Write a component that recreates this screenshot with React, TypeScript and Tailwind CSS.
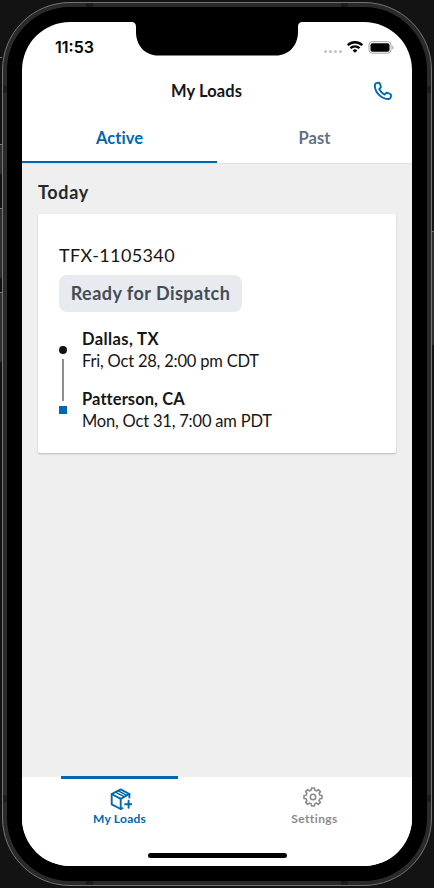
import type { ReactNode } from "react";

type Stop = {
  city: string;
  time: string;
  cityClass: string;
};

const stops: Stop[] = [
  {
    city: "Dallas, TX",
    time: "Fri, Oct 28, 2:00 pm CDT",
    cityClass: "tracking-[0.4px]",
  },
  {
    city: "Patterson, CA",
    time: "Mon, Oct 31, 7:00 am PDT",
    cityClass: "tracking-[0.08px]",
  },
];

const SideButton = ({ className }: { className: string }) => (
  <div
    className={`absolute w-[2px] border-t border-[#777] bg-[#2e2e2e] ${className}`}
  />
);

const AntennaBand = ({ className }: { className: string }) => (
  <div className={`absolute bg-[#1c1c1c] ${className}`} />
);

const Phone = ({ children }: { children: ReactNode }) => (
  <div className="relative h-[888px] w-[434px] overflow-hidden bg-[#131313] p-[2px]">
    <SideButton className="left-0 top-[57px] h-[1px]" />
    <SideButton className="left-0 top-[144px] h-[30px]" />
    <SideButton className="left-0 top-[208px] h-[70px]" />
    <SideButton className="left-0 top-[292px] h-[70px]" />
    <SideButton className="right-0 top-[231px] h-[114px]" />
    <div className="h-full rounded-[68px] border border-[#747474] bg-[#2a2a2a] p-1">
      <div className="h-full rounded-[63px] bg-black p-[15px]">
        <div className="relative flex h-full flex-col overflow-hidden rounded-[48px] bg-white">
          {children}
        </div>
      </div>
    </div>
    <AntennaBand className="left-[86px] top-[3px] h-1 w-[7px]" />
    <AntennaBand className="right-[86px] top-[3px] h-1 w-[7px]" />
    <AntennaBand className="bottom-[3px] left-[86px] h-1 w-[7px]" />
    <AntennaBand className="bottom-[3px] right-[86px] h-1 w-[7px]" />
    <AntennaBand className="left-[3px] top-[86px] h-[7px] w-1" />
    <AntennaBand className="right-[3px] top-[86px] h-[7px] w-1" />
    <AntennaBand className="bottom-[86px] left-[3px] h-[7px] w-1" />
    <AntennaBand className="bottom-[86px] right-[3px] h-[7px] w-1" />
  </div>
);

const Notch = () => (
  <svg
    className="absolute left-[109px] top-0"
    width="172"
    height="34"
    viewBox="0 0 172 34"
    aria-hidden
  >
    <path d="M0 0c3.500 0 5 1.500 5 5v5c0 14 9.500 23.500 22 23.500h118c12.500 0 22-9.500 22-23.500V5c0-3.500 1.500-5 5-5z" />
  </svg>
);

const StatusBar = () => (
  <div className="flex h-[47px] shrink-0 items-center justify-between pl-[33px] pr-[18px] pt-[3px]">
    <span className="font-['Inter',sans-serif] text-[16px] font-semibold leading-5 text-black">
      11:53
    </span>
    <div className="flex items-center">
      <div className="mr-[5px] mt-[9px] flex gap-[2px]">
        {[0, 1, 2, 3].map((i) => (
          <span key={i} className="size-[3px] rounded-full bg-[#c4c4c4]" />
        ))}
      </div>
      <svg width="16" height="12" viewBox="0 0 16 12" aria-hidden>
        <g fill="none" stroke="#000" strokeWidth="2.400">
          <path d="M.8 4.200a10.300 10.300 0 0 1 14.400 0" />
          <path d="M3.500 7.200a6.400 6.400 0 0 1 9 0" />
        </g>
        <path d="M8 11.800 5.600 9.400a3.400 3.400 0 0 1 4.800 0z" />
      </svg>
      <svg className="ml-[5px]" width="26" height="13" viewBox="0 0 26 13" aria-hidden>
        <rect x="1" y=".7" width="22" height="11.500" rx="3.300" fill="none" stroke="#a3a3a3" />
        <rect x="2.500" y="2.200" width="19" height="8.500" rx="2" />
        <path d="M24.300 4.500c1.700.6 1.700 3.400 0 4z" fill="#a3a3a3" />
      </svg>
    </div>
  </div>
);

const PhoneIcon = () => (
  <svg
    className="absolute right-[19px] top-[12px]"
    width="20"
    height="20"
    viewBox="0 0 20 20"
    fill="none"
    stroke="#0067b0"
    strokeWidth="1.900"
    strokeLinecap="round"
    strokeLinejoin="round"
    aria-hidden
  >
    <path d="M3.300 2.200 5 1.800c.9-.2 1.500.1 1.800.8l1 2.500c.3.700.1 1.300-.4 1.800L6.200 8.200c1.200 2.400 2.900 4.100 5.400 5.400l1.200-1.300c.5-.5 1.100-.6 1.800-.4l2.600 1.100c.7.300 1 .9.800 1.700l-.4 1.900c-.2.900-.8 1.400-1.700 1.400C8.300 18 1.800 11.600 1.800 4c0-.9.600-1.600 1.500-1.800z" />
  </svg>
);

const BoxPlusIcon = () => (
  <svg
    width="24"
    height="24"
    viewBox="0 0 24 24"
    fill="none"
    stroke="currentColor"
    strokeWidth="1.900"
    strokeLinecap="round"
    strokeLinejoin="round"
    aria-hidden
  >
    <path d="M14.500 21.200 12.700 22 3.700 17.300V7l9-4.600L21.400 7v3.500" />
    <path d="M3.700 7 12.700 11.800 21.400 7M12.700 11.800V22" />
    <path strokeWidth="1.500" d="m7.300 5.200 8.900 4.500M10.300 3.900l8.600 4.400" />
    <path d="M20.600 13.800v7M17.100 17.300h7" />
  </svg>
);

const toothAngles = [0, 45, 90, 135, 180, 225, 270, 315];

// each tooth is a rounded crown, joined to the next one by a shallow valley
const gearPath =
  toothAngles
    .flatMap((angle) =>
      [
        [7.1, -14],
        [9.1, -9],
        [9.1, 9],
        [7.1, 14],
      ].map(([radius, offset]) => {
        const rad = ((angle + offset) * Math.PI) / 180;
        const x = (12 + radius * Math.sin(rad)).toFixed(2);
        const y = (12 - radius * Math.cos(rad)).toFixed(2);
        return `${x} ${y}`;
      })
    )
    .reduce((path, point, i) => path + (i === 0 ? "M" : "L") + point, "") + "Z";

const GearIcon = () => (
  <svg
    width="24"
    height="24"
    viewBox="0 0 24 24"
    fill="none"
    stroke="currentColor"
    strokeWidth="1.600"
    strokeLinejoin="round"
    aria-hidden
  >
    <path d={gearPath} />
    <circle cx="12" cy="12" r="2.700" />
  </svg>
);

const Header = () => (
  <header className="relative flex h-[44px] shrink-0 items-center justify-center pr-[21px]">
    <h1 className="text-[16.500px] font-bold tracking-[0.1px] text-[#161616]">
      My Loads
    </h1>
    <PhoneIcon />
  </header>
);

const Tabs = () => (
  <div className="grid h-[51px] shrink-0 grid-cols-2 border-b border-[#e2e2e2] text-center text-[16.500px] font-bold tracking-[0.05px]">
    <div className="border-b-2 border-[#0067b0] pt-[13px] text-[#0067b0]">
      Active
    </div>
    <div className="pt-[13px] text-[#64707f]">Past</div>
  </div>
);

const LoadCard = () => (
  <section className="h-[239px] rounded-[2px] bg-white px-[21px] pt-[29px] shadow-[0_1px_2px_rgba(0,0,0,0.22)]">
    <p className="text-[18px] leading-6 tracking-[0.38px] text-[#161616]">
      TFX-1105340
    </p>
    <div className="mt-2 flex h-[37px] w-[183px] items-center justify-center rounded-lg bg-[#e7ebf0] text-[18px] font-bold tracking-[0.46px] text-[#434d54]">
      Ready for Dispatch
    </div>
    <div className="mt-4 flex">
      <div className="flex w-2 flex-col items-center pt-[18px]">
        <span className="size-2 rounded-full bg-[#111]" />
        <span className="my-[5px] h-[42px] w-[2px] bg-[#8f8f8f]" />
        <span className="size-2 bg-[#0067b0]" />
      </div>
      <ul className="ml-[15px] flex flex-col gap-4 text-[16.500px] leading-[22px] text-[#161616]">
        {stops.map((stop) => (
          <li key={stop.city}>
            <p className={`font-bold ${stop.cityClass}`}>{stop.city}</p>
            <p className="tracking-[-0.2px]">{stop.time}</p>
          </li>
        ))}
      </ul>
    </div>
  </section>
);

const BottomNav = () => (
  <nav className="relative grid h-[89px] shrink-0 grid-cols-2 bg-white text-[12px] font-bold">
    <div className="flex flex-col items-center text-[#0067b0]">
      <span className="-mt-px h-[3px] w-[117px] bg-[#0067b0]" />
      <div className="mt-2 h-6">
        <BoxPlusIcon />
      </div>
      <span className="leading-4 tracking-[0.25px]">My Loads</span>
    </div>
    <div className="flex flex-col items-center pt-[8px] text-[#8b8b8b]">
      <div className="-ml-[3px] h-6">
        <GearIcon />
      </div>
      <span className="mt-[2px] leading-4 tracking-[0.4px]">Settings</span>
    </div>
    <span className="absolute bottom-2 left-[126px] h-[5px] w-[139px] rounded-full bg-black" />
  </nav>
);

export default function App() {
  return (
    <div className="font-['Lato',sans-serif]">
      <Phone>
        <StatusBar />
        <Header />
        <Tabs />
        <main className="flex-1 bg-[#efefef] px-4 pt-4">
          <h2 className="mb-[10px] text-[18px] font-bold leading-6 tracking-[0.65px] text-[#25292c]">
            Today
          </h2>
          <LoadCard />
        </main>
        <BottomNav />
        <Notch />
      </Phone>
    </div>
  );
}
